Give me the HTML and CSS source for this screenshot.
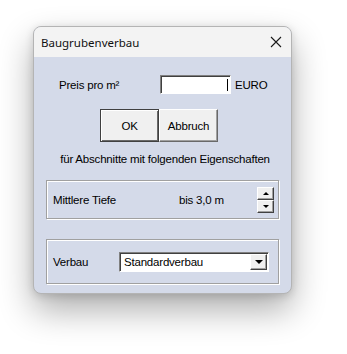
FILE: index.html
```html
<!DOCTYPE html>
<html lang="de">
<head>
    <meta charset="UTF-8">
    <meta name="viewport" content="width=device-width, initial-scale=1.0">
    <title>Baugrubenverbau</title>
    <link rel="stylesheet" href="styles.css">
</head>
<body>
    <!-- Dialog window -->
    <div class="window">
        <div class="titlebar">
            <span class="title">Baugrubenverbau</span>
            <svg class="close" width="12" height="12" viewBox="0 0 12 12">
                <path d="M1 1 L11 11 M11 1 L1 11" stroke="#1a1a1a" stroke-width="1.1" fill="none"/>
            </svg>
        </div>

        <div class="content">
            <!-- Price row -->
            <div class="price-row">
                <span class="price-label">Preis pro m²</span>
                <div class="input"><span class="caret"></span></div>
                <span class="unit">EURO</span>
            </div>

            <!-- Buttons -->
            <div class="button-row">
                <button class="btn default">OK</button>
                <button class="btn">Abbruch</button>
            </div>

            <div class="caption">für Abschnitte mit folgenden Eigenschaften</div>

            <!-- Depth group -->
            <div class="group depth">
                <span class="field-label">Mittlere Tiefe</span>
                <span class="depth-value">bis 3,0 m</span>
                <div class="spinner">
                    <div class="spin-btn"><span class="tri up"></span></div>
                    <div class="spin-btn"><span class="tri down"></span></div>
                </div>
            </div>

            <!-- Verbau group -->
            <div class="group verbau">
                <span class="field-label">Verbau</span>
                <div class="select">
                    <span class="select-text">Standardverbau</span>
                    <div class="drop-btn"><span class="tri down"></span></div>
                </div>
            </div>
        </div>
    </div>
</body>
</html>
```

FILE: styles.css
```css
/* General Styles */
* {
    margin: 0;
    padding: 0;
    box-sizing: border-box;
}

html,
body {
    background: #fff;
    min-height: 100%;
}

body {
    font-family: 'Liberation Sans', Arial, sans-serif;
    font-size: 11.5px;
    color: #000;
    padding: 26px 0 60px 33px;
}

.window {
    width: 259px;
    height: 268px;
    border: 1px solid #b4b4b4;
    border-radius: 8px;
    overflow: hidden;
    background: #d4dae9;
    box-shadow: 0 16px 34px rgba(0, 0, 0, 0.32), 0 2px 8px rgba(0, 0, 0, 0.14);
    display: flex;
    flex-direction: column;
}

/* Title bar */
.titlebar {
    height: 30px;
    background: #f3f3f3;
    display: flex;
    align-items: center;
    justify-content: space-between;
    padding: 0 9px 0 7px;
}

.title {
    font-family: 'Noto Sans', 'Open Sans', sans-serif;
    font-size: 11.5px;
    color: #111;
}

/* Content */
.content {
    flex: 1;
    padding-top: 18px;
}

.price-row {
    display: flex;
    align-items: center;
    height: 19px;
    letter-spacing: -0.2px;
}

.price-label {
    width: 126px;
    padding-left: 25px;
}

.input {
    width: 71px;
    height: 19px;
    background: #fff;
    border-top: 1px solid #808080;
    border-left: 1px solid #808080;
    border-right: 1px solid #fff;
    border-bottom: 1px solid #fff;
    box-shadow: inset 1px 1px #404040;
    position: relative;
}

.caret {
    position: absolute;
    right: 2px;
    top: 3px;
    width: 1px;
    height: 12px;
    background: #000;
}

.unit {
    margin-left: 4px;
}

.button-row {
    display: flex;
    margin: 15px 0 0 66px;
}

.btn {
    width: 59px;
    height: 33px;
    background: #f0f0f0;
    font-family: 'Liberation Sans', Arial, sans-serif;
    font-size: 11.5px;
    letter-spacing: -0.2px;
    color: #000;
    border: 1px solid;
    border-color: #fff #696969 #696969 #fff;
    box-shadow: inset -1px -1px #a0a0a0;
}

.btn.default {
    border: 1px solid #404040;
    box-shadow: inset 1px 1px #fff, inset -1px -1px #696969;
}

.caption {
    margin-top: 10px;
    text-align: center;
    height: 14px;
    line-height: 14px;
    letter-spacing: -0.2px;
    padding-left: 5px;
}

/* Group boxes */
.group {
    margin-left: 12px;
    width: 233px;
    border: 1px solid #a0a0a0;
    box-shadow: inset 1px 1px #fff, 1px 1px #fff;
    display: flex;
    align-items: center;
    letter-spacing: -0.2px;
}

.group.depth {
    margin-top: 14px;
    height: 39px;
}

.group.verbau {
    margin-top: 20px;
    height: 45px;
}

.field-label {
    padding-left: 6px;
}

.depth .field-label {
    width: 132px;
}

.verbau .field-label {
    width: 72px;
}

.depth-value {
    width: 78px;
}

/* Spinner */
.spinner {
    display: flex;
    flex-direction: column;
    width: 17px;
    height: 26px;
}

.spin-btn,
.drop-btn {
    background: #f0f0f0;
    border: 1px solid;
    border-color: #fff #404040 #404040 #fff;
    box-shadow: inset -1px -1px #a0a0a0;
    display: flex;
    align-items: center;
    justify-content: center;
}

.spin-btn {
    height: 13px;
}

.tri {
    width: 0;
    height: 0;
    border-left: 3px solid transparent;
    border-right: 3px solid transparent;
}

.tri.up {
    border-bottom: 3px solid #000;
}

.tri.down {
    border-top: 3px solid #000;
}

/* Dropdown */
.select {
    width: 150px;
    height: 20px;
    background: #fff;
    border-top: 1px solid #808080;
    border-left: 1px solid #808080;
    border-right: 1px solid #fff;
    border-bottom: 1px solid #fff;
    box-shadow: inset 1px 1px #404040;
    display: flex;
    align-items: center;
    justify-content: space-between;
    padding: 1px 1px 1px 4px;
}

.drop-btn {
    width: 17px;
    height: 16px;
}

.drop-btn .tri {
    border-left-width: 4px;
    border-right-width: 4px;
    border-top-width: 4px;
}
```
